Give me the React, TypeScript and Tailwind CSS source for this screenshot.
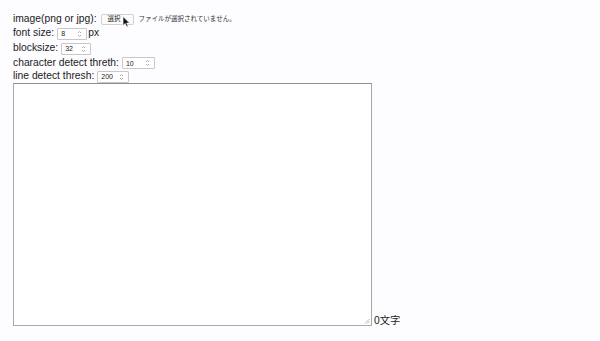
import React from "react";

const font = { fontFamily: '"Liberation Sans", "Noto Sans CJK JP", sans-serif' };

function NumBox({ value, w }: { value: string; w: string }) {
  return (
    <span
      className={`inline-flex items-center justify-between h-[12px] ${w} border border-[#c8c8c8] bg-white pl-[3px] pr-[2px] rounded-[1px] align-middle`}
    >
      <span className="text-[7px] leading-none text-[#222]">{value}</span>
      <svg width="5" height="8" viewBox="0 0 5 8" className="mr-[2px]">
        <path d="M1 3 L2.5 1.5 L4 3" fill="none" stroke="#999" strokeWidth="0.8" />
        <path d="M1 5 L2.5 6.5 L4 5" fill="none" stroke="#999" strokeWidth="0.8" />
      </svg>
    </span>
  );
}

export default function App() {
  return (
    <div className="w-[600px] h-[341px] bg-[#fdfcfe] overflow-hidden text-[#222]" style={font}>
      <div className="pl-[13px] pt-[11px] flex flex-col">
        <div className="flex items-center h-[14px] text-[10.3px] leading-none mt-[1px]">
          <span>image(png or jpg):</span>
          <span className="relative ml-[4px] inline-flex items-center justify-center w-[33px] h-[11px] border border-[#d0d0d0] bg-[#fbfbfb] rounded-[2px] text-[6.5px]">
            <span className="-ml-[6px]">選択</span>
            <svg width="9" height="12" viewBox="0 0 9 12" className="absolute left-[20px] top-[1px]">
              <path d="M1 0.5 L1 9.5 L3.2 7.6 L4.8 11 L6.2 10.3 L4.7 7.1 L7.6 7.1 Z" fill="#111" stroke="#fff" strokeWidth="0.7" />
            </svg>
          </span>
          <span className="ml-[5px] text-[6.5px] text-[#333]">ファイルが選択されていません。</span>
        </div>
        <div className="flex items-center h-[15px] text-[10.3px] leading-none">
          <span>font size:</span>
          <span className="ml-[3px] flex"><NumBox value="8" w="w-[30px]" /></span>
          <span className="ml-[1px]">px</span>
        </div>
        <div className="flex items-center h-[15px] text-[10.3px] leading-none">
          <span>blocksize:</span>
          <span className="ml-[3px] flex"><NumBox value="32" w="w-[30px]" /></span>
        </div>
        <div className="flex items-center h-[14px] text-[10.3px] leading-none">
          <span>character detect threth:</span>
          <span className="ml-[3px] flex"><NumBox value="10" w="w-[33px]" /></span>
        </div>
        <div className="flex items-center h-[13px] text-[10.3px] leading-none">
          <span>line detect thresh:</span>
          <span className="ml-[3px] flex"><NumBox value="200" w="w-[32px]" /></span>
        </div>
        <div className="flex items-end">
          <div className="relative w-[359px] h-[243px] border border-[#a9a9a9] border-t-[#8f8f8f] bg-white">
            <svg width="6" height="6" viewBox="0 0 6 6" className="absolute right-[1px] bottom-[1px]">
              <path d="M5.5 1 L1 5.5 M5.5 3.2 L3.2 5.5" stroke="#999" strokeWidth="0.7" />
            </svg>
          </div>
          <span className="ml-[2px] text-[10.3px] leading-none">0文字</span>
        </div>
      </div>
    </div>
  );
}
